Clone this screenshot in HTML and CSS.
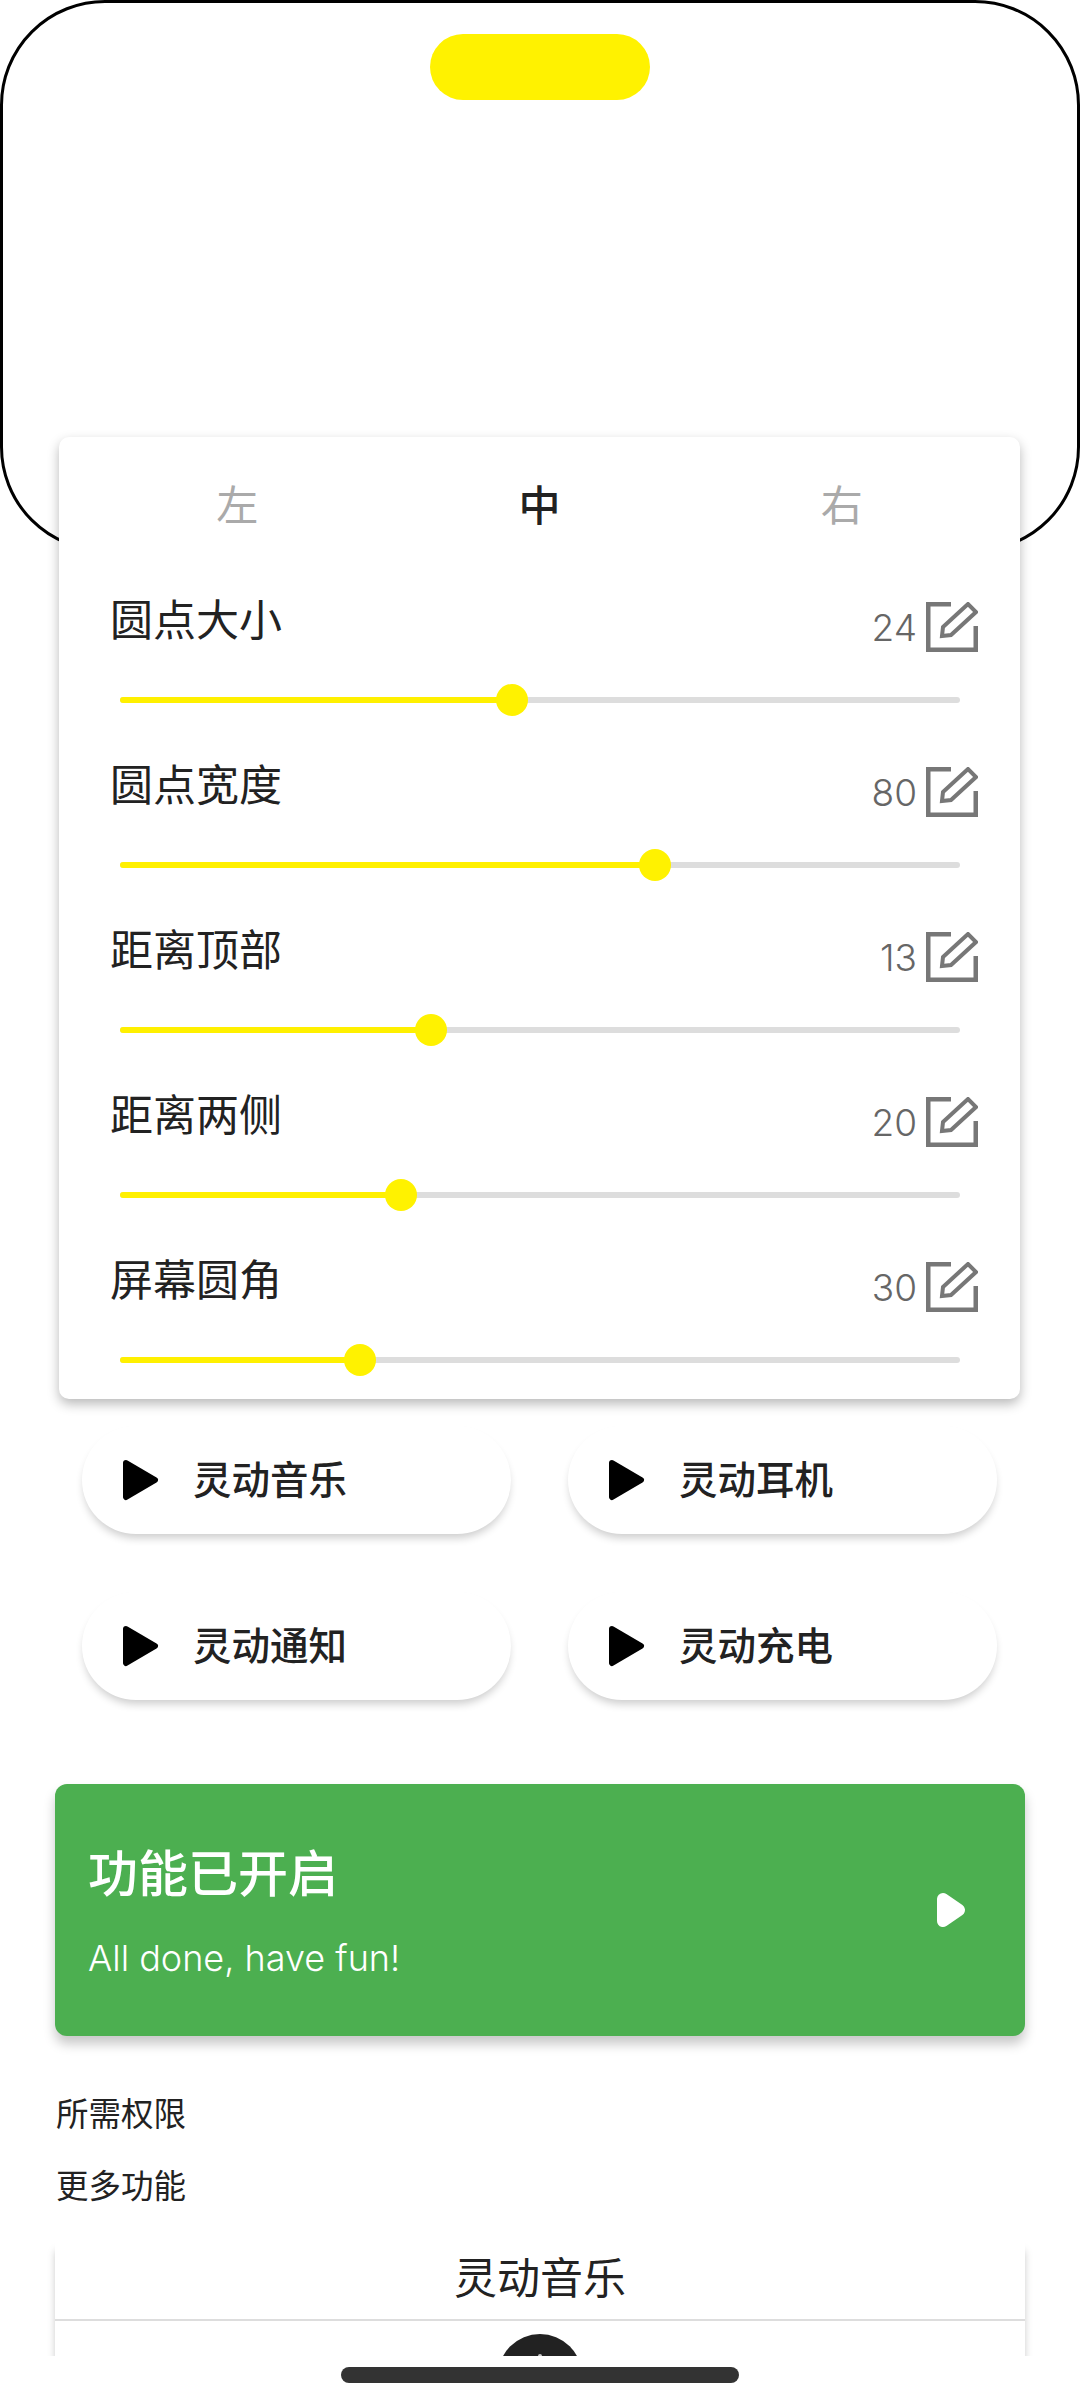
FILE: index.html
```html
<!DOCTYPE html>
<html lang="zh-CN">
<head>
  <meta charset="UTF-8">
  <title>灵动音乐</title>
  <link rel="stylesheet" href="styles.css">
</head>
<body>
  <div class="page">
    <div class="preview">
      <div class="island"></div>
    </div>

    <section class="panel">
      <div class="tabs">
        <span class="tab">左</span>
        <span class="tab active">中</span>
        <span class="tab">右</span>
      </div>

      <div class="row">
        <div class="row-head">
          <span class="row-label">圆点大小</span>
          <span class="row-value">24</span>
          <svg class="edit" viewBox="0 0 52 50"><path d="M25 2H2V48H50V24"/><path class="pen" d="M16 34L17 25L42 2L50 10L25 33Z"/></svg>
        </div>
        <div class="slider"><div class="fill" style="width:46.7%"></div></div>
      </div>

      <div class="row">
        <div class="row-head">
          <span class="row-label">圆点宽度</span>
          <span class="row-value">80</span>
          <svg class="edit" viewBox="0 0 52 50"><path d="M25 2H2V48H50V24"/><path class="pen" d="M16 34L17 25L42 2L50 10L25 33Z"/></svg>
        </div>
        <div class="slider"><div class="fill" style="width:63.7%"></div></div>
      </div>

      <div class="row">
        <div class="row-head">
          <span class="row-label">距离顶部</span>
          <span class="row-value">13</span>
          <svg class="edit" viewBox="0 0 52 50"><path d="M25 2H2V48H50V24"/><path class="pen" d="M16 34L17 25L42 2L50 10L25 33Z"/></svg>
        </div>
        <div class="slider"><div class="fill" style="width:37%"></div></div>
      </div>

      <div class="row">
        <div class="row-head">
          <span class="row-label">距离两侧</span>
          <span class="row-value">20</span>
          <svg class="edit" viewBox="0 0 52 50"><path d="M25 2H2V48H50V24"/><path class="pen" d="M16 34L17 25L42 2L50 10L25 33Z"/></svg>
        </div>
        <div class="slider"><div class="fill" style="width:33.5%"></div></div>
      </div>

      <div class="row">
        <div class="row-head">
          <span class="row-label">屏幕圆角</span>
          <span class="row-value">30</span>
          <svg class="edit" viewBox="0 0 52 50"><path d="M25 2H2V48H50V24"/><path class="pen" d="M16 34L17 25L42 2L50 10L25 33Z"/></svg>
        </div>
        <div class="slider"><div class="fill" style="width:28.6%"></div></div>
      </div>
    </section>

    <div class="demo-grid">
      <button class="demo"><svg class="play" viewBox="0 0 37 42"><path d="M4 4L33 21L4 38Z"/></svg><span class="demo-text">灵动音乐</span></button>
      <button class="demo"><svg class="play" viewBox="0 0 37 42"><path d="M4 4L33 21L4 38Z"/></svg><span class="demo-text">灵动耳机</span></button>
      <button class="demo"><svg class="play" viewBox="0 0 37 42"><path d="M4 4L33 21L4 38Z"/></svg><span class="demo-text">灵动通知</span></button>
      <button class="demo"><svg class="play" viewBox="0 0 37 42"><path d="M4 4L33 21L4 38Z"/></svg><span class="demo-text">灵动充电</span></button>
    </div>

    <section class="status">
      <div class="status-text">
        <div class="status-title">功能已开启</div>
        <div class="status-sub">All done, have fun!</div>
      </div>
      <svg class="status-play" viewBox="0 0 30 36"><path d="M7 7L23 18L7 29Z"/></svg>
    </section>

    <p class="link first">所需权限</p>
    <p class="link">更多功能</p>

    <section class="card">
      <h2 class="card-title">灵动音乐</h2>
      <div class="disc"></div>
    </section>
  </div>

  <div class="home-strip"><div class="home-bar"></div></div>
</body>
</html>
```

FILE: styles.css
```css
* {
  box-sizing: border-box;
}
body {
  margin: 0;
  background: #fff;
  color: #222;
  font-family: "Roboto", "Noto Sans CJK SC", sans-serif;
}
.page {
  height: 2356px;
  overflow: hidden;
}

/* top preview */
.preview {
  height: 552px;
  padding-top: 31px;
  background: #fff;
  border: 3px solid #000;
  border-radius: 105px;
}
.island {
  width: 220px;
  height: 66px;
  margin: 0 auto;
  background: #fff200;
  border-radius: 33px;
}

/* settings panel */
.panel {
  position: relative;
  width: 961px;
  height: 962px;
  margin: -115px 0 0 59px;
  background: #fff;
  border-radius: 10px;
  box-shadow: 0 5px 12px rgba(0, 0, 0, 0.28);
}
.tabs {
  display: grid;
  grid-template-columns: repeat(3, 1fr);
  height: 137px;
  padding: 0 27px 6px;
  align-items: center;
  text-align: center;
  font-size: 42px;
  color: #aaa;
}
.tab.active {
  color: #222;
  font-weight: 500;
}
.row {
  height: 165px;
  padding-top: 27px;
}
.row-head {
  display: flex;
  height: 52px;
  padding: 0 42px 0 51px;
  align-items: center;
}
.row-label {
  align-self: flex-start;
  margin-right: auto;
  font-size: 43px;
  line-height: 40px;
}
.row-value {
  margin-right: 9px;
  font-family: "Inter", sans-serif;
  font-size: 37px;
  font-weight: 300;
  color: #666;
}
.edit {
  width: 52px;
  height: 50px;
  fill: none;
  stroke: #777;
  stroke-width: 5;
}
.edit .pen {
  stroke-width: 4;
}
.slider {
  position: relative;
  height: 6px;
  margin: 44px 60px 0 61px;
  background: #ddd;
  border-radius: 3px;
}
.fill {
  position: relative;
  height: 6px;
  background: #fff000;
  border-radius: 3px;
}
.fill::after {
  content: "";
  position: absolute;
  right: -16px;
  top: -13px;
  width: 32px;
  height: 32px;
  background: #fff200;
  border-radius: 50%;
}

/* demo buttons */
.demo-grid {
  display: grid;
  grid-template-columns: 429px 429px;
  column-gap: 57px;
  row-gap: 58px;
  margin: 27px 0 0 82px;
}
.demo {
  display: flex;
  height: 108px;
  padding: 0 0 0 40px;
  align-items: center;
  background: #fff;
  border: 0;
  border-radius: 54px;
  box-shadow: 0 6px 8px -2px rgba(0, 0, 0, 0.2);
  font-family: inherit;
  font-size: 38.5px;
  font-weight: 500;
  color: #222;
}
.demo-text {
  margin-bottom: 6px;
}
.play {
  width: 37px;
  height: 42px;
  margin-right: 34px;
  fill: #000;
  stroke: #000;
  stroke-width: 6;
  stroke-linejoin: round;
}

/* status card */
.status {
  display: flex;
  width: 970px;
  height: 252px;
  margin: 84px 0 0 55px;
  padding: 0 59px 0 33px;
  align-items: center;
  justify-content: space-between;
  background: #4caf50;
  border-radius: 12px;
  box-shadow: 0 8px 12px rgba(0, 0, 0, 0.22);
  color: #fff;
}
.status-text {
  padding-top: 5px;
}
.status-title {
  font-size: 50px;
  line-height: 60px;
  font-weight: 500;
}
.status-sub {
  margin-top: 30px;
  font-family: "Inter", sans-serif;
  font-size: 36px;
  line-height: 46px;
  font-weight: 300;
}
.status-play {
  width: 30px;
  height: 36px;
  fill: #fff;
  stroke: #fff;
  stroke-width: 12;
  stroke-linejoin: round;
}

/* links */
.link {
  margin: 32px 0 0 56px;
  font-size: 32.5px;
  line-height: 40px;
}
.link.first {
  margin-top: 59px;
}

/* bottom card */
.card {
  width: 970px;
  height: 200px;
  margin: 35px 0 0 55px;
  background: #fff;
  box-shadow: 0 8px 8px -1px rgba(0, 0, 0, 0.25);
}
.card-title {
  height: 79px;
  margin: 0;
  border-bottom: 2px solid #ddd;
  text-align: center;
  font-size: 43px;
  font-weight: 400;
  line-height: 74px;
}
.disc {
  position: relative;
  width: 84px;
  height: 84px;
  margin: 13px auto 0;
  background: #222;
  border-radius: 50%;
}
.disc::before {
  content: "";
  position: absolute;
  left: 40px;
  top: 20px;
  width: 4px;
  height: 4px;
  background: #ccc;
  border-radius: 50%;
}

/* home indicator */
.home-strip {
  height: 44px;
  padding-top: 11px;
}
.home-bar {
  width: 398px;
  height: 16px;
  margin: 0 auto;
  background: #333;
  border-radius: 8px;
}
```
